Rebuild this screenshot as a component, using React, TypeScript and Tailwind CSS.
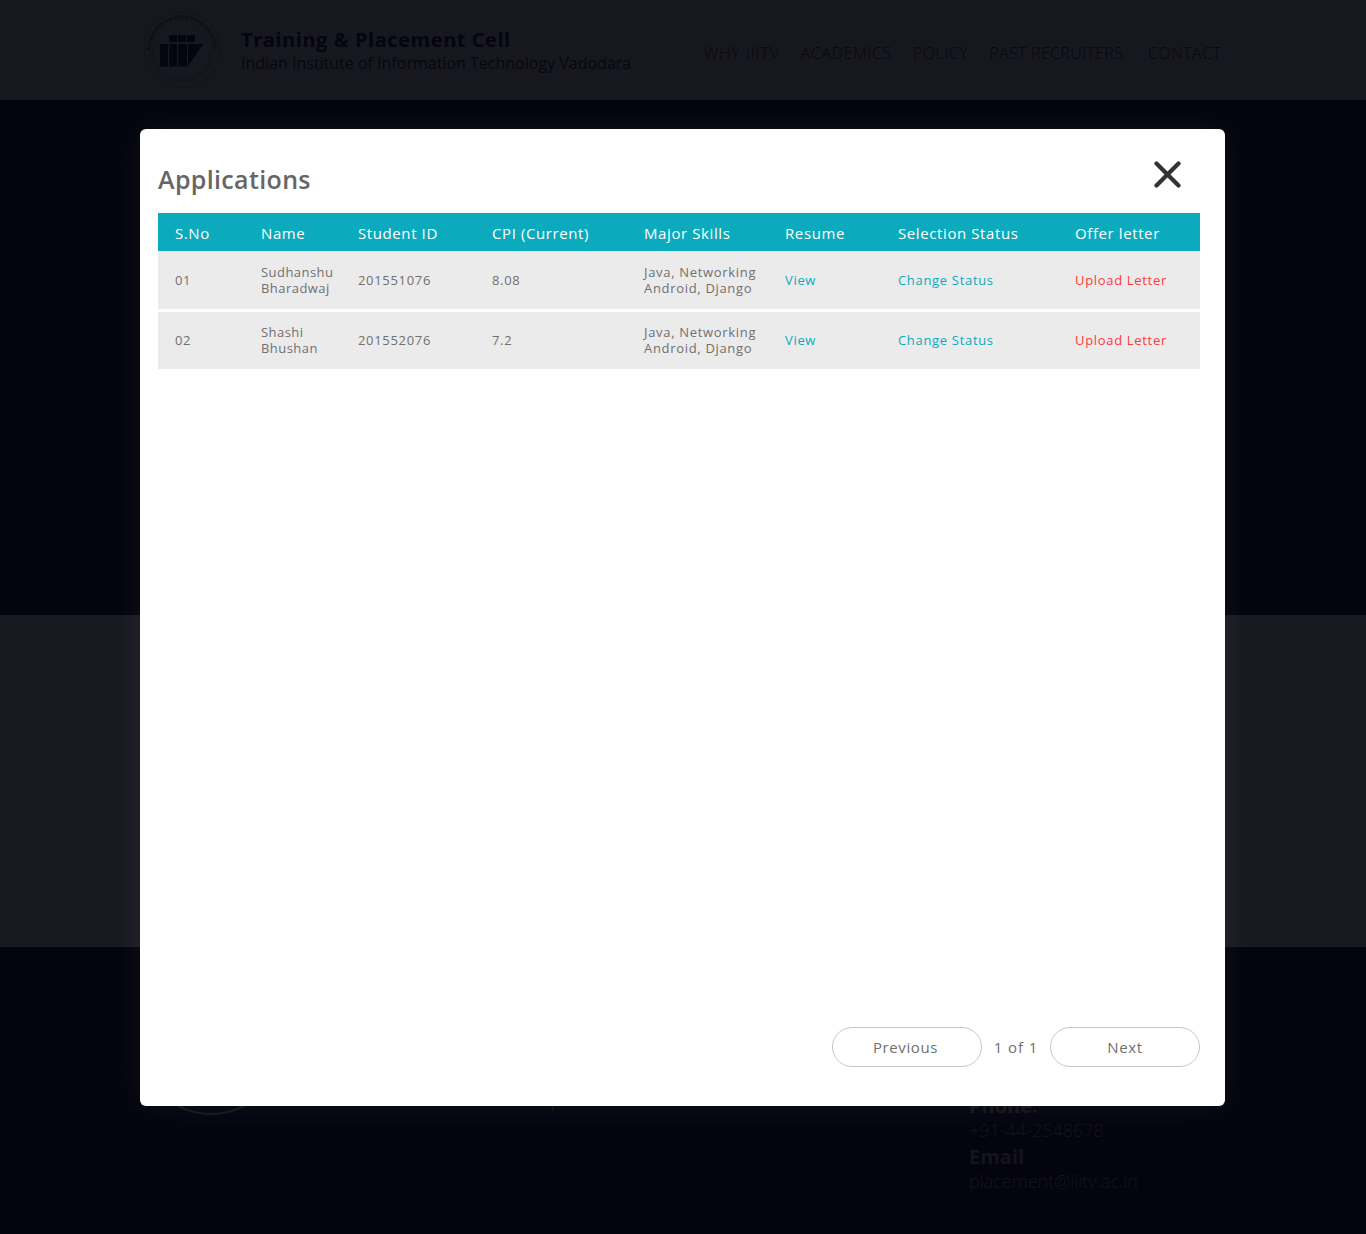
const open = "font-['Open_Sans',sans-serif]";

const columns = "grid grid-cols-[86px_97px_134px_152px_141px_113px_177px_1fr] items-center pl-[17px]";

const rows = [
  { no: "01", name: ["Sudhanshu", "Bharadwaj"], id: "201551076", cpi: "8.08", h: "h-[58px] pt-[1px]" },
  { no: "02", name: ["Shashi", "Bhushan"], id: "201552076", cpi: "7.2", h: "h-[57px]" },
];

function Logo({ size = 80 }: { size?: number }) {
  return (
    <svg width={size} height={size} viewBox="0 0 80 80" fill="none">
      <defs>
        <path id="ringBottom" d="M8 40a32 32 0 0 0 64 0" />
      </defs>
      <circle cx="40" cy="40" r="38" stroke="#11111a" strokeWidth="0.7" />
      <circle cx="40" cy="40" r="29" stroke="#12121b" strokeWidth="0.7" />
      <path d="M7 40a33 33 0 0 1 66 0" stroke="#0e0e17" strokeWidth="3.5" strokeDasharray="2 1 1 1.5" />
      <text fill="#0f0f18" fontSize="3" fontFamily="'Open Sans',sans-serif">
        <textPath href="#ringBottom">INDIAN INSTITUTE OF INFORMATION TECHNOLOGY VADODARA</textPath>
      </text>
      <g fill="#05050f">
        <rect x="18" y="34" width="8" height="22.5" />
        <rect x="27.5" y="34" width="7.5" height="22.5" />
        <rect x="36.5" y="34" width="8.5" height="22.5" />
        <polygon points="46,34 61,34 46,56.5" />
        <rect x="27.3" y="25" width="7.7" height="6.8" />
        <rect x="36" y="25" width="8" height="6.8" />
        <rect x="45" y="25" width="8" height="6.8" />
      </g>
    </svg>
  );
}

export default function App() {
  return (
    <div className={`relative h-[1234px] w-full overflow-hidden bg-[#04040f] ${open}`}>
      <header className="flex h-[100px] items-center bg-[#17171f] pl-[142px] pr-[145px]">
        <div className="mr-[19px] flex h-[80px] w-[80px] justify-center">
          <Logo />
        </div>
        <div className="flex w-[463px] flex-col pb-[1px]">
          <span className="text-[20px] font-bold leading-[26px] tracking-[0.55px] text-[#05050f]">Training &amp; Placement Cell</span>
          <span className="text-[16px] leading-[20px] text-[#07070f]">Indian Institute of Information Technology Vadodara</span>
        </div>
        <nav className="flex flex-1 justify-between pt-[5px] text-[16px] font-light text-[#07070f]">
          <span className="tracking-[0.85px]">WHY IIITV</span>
          <span className="tracking-[0.6px]">ACADEMICS</span>
          <span className="tracking-[0.55px]">POLICY</span>
          <span className="tracking-[0.33px]">PAST RECRUITERS</span>
          <span className="pl-[4px] tracking-[0.4px]">CONTACT</span>
        </nav>
      </header>

      <section className="h-[515px] bg-[#04040f]" />
      <section className="h-[332px] bg-[#191921]" />

      <footer className="flex h-[287px] pl-[141px] pt-[28px]">
        <div className="h-[140px] w-[140px] shrink-0 rounded-full border-2 border-[#16161e]" />
        <div className="ml-[271px] mt-[132px] h-[4px] w-[1px] shrink-0 bg-[#16161e]" />
        <div className="ml-[416px] flex flex-col pt-[118px] text-[18px] leading-[25.3px] text-[#14141c]">
          <span className="text-[20px] font-bold">Phone:</span>
          <span className="font-light">+91-44-2548678</span>
          <span className="text-[20px] font-bold">Email</span>
          <span className="font-light">placement@iiitv.ac.in</span>
        </div>
      </footer>

      <div className="absolute left-[140px] top-[129px] flex h-[977px] w-[1085px] flex-col rounded-[6px] bg-white pl-[18px] pr-[25px] shadow-[0_0_35px_rgba(255,255,255,0.06)]">
        <div className="flex h-[84px] items-start justify-between pr-[19px]">
          <h1 className="mt-[33px] text-[25px] font-semibold leading-[34px] tracking-[0.35px] text-[#666666]">Applications</h1>
          <svg className="mt-[32px]" width="27" height="27" viewBox="0 0 27 27" fill="none" stroke="#333333" strokeWidth="4.2" strokeLinecap="round">
            <line x1="2.5" y1="2.5" x2="24.5" y2="24.5" />
            <line x1="24.5" y1="2.5" x2="2.5" y2="24.5" />
          </svg>
        </div>

        <div className={`${columns} h-[38px] bg-[#0baabd] pt-[2px] text-[15px] tracking-[0.6px] text-white`}>
          <span>S.No</span>
          <span>Name</span>
          <span>Student ID</span>
          <span>CPI (Current)</span>
          <span>Major Skills</span>
          <span>Resume</span>
          <span>Selection Status</span>
          <span>Offer letter</span>
        </div>

        <div className="flex flex-col gap-[3px]">
          {rows.map((r) => (
            <div key={r.no} className={`${columns} ${r.h} bg-[#ebebeb] text-[13px] tracking-[0.68px] text-[#707070]`}>
              <span>{r.no}</span>
              <span className="flex flex-col pb-[2px] leading-[16px] tracking-[0.45px]">
                <span>{r.name[0]}</span>
                <span>{r.name[1]}</span>
              </span>
              <span>{r.id}</span>
              <span>{r.cpi}</span>
              <span className="flex flex-col leading-[15.5px]">
                <span>Java, Networking</span>
                <span>Android, Django</span>
              </span>
              <span className="text-[#0baabd]">View</span>
              <span className="text-[#0baabd]">Change Status</span>
              <span className="text-[#ff3a3a]">Upload Letter</span>
            </div>
          ))}
        </div>

        <div className="mt-auto mb-[39px] flex items-center justify-end text-[15px] tracking-[0.6px] text-[#707070]">
          <button className="h-[40px] w-[150px] rounded-full border border-[#c8c8c8] bg-white pr-[3px]">Previous</button>
          <span className="flex w-[68px] justify-center tracking-[0.95px]">1 of 1</span>
          <button className="h-[40px] w-[150px] rounded-full border border-[#c8c8c8] bg-white">Next</button>
        </div>
      </div>
    </div>
  );
}
